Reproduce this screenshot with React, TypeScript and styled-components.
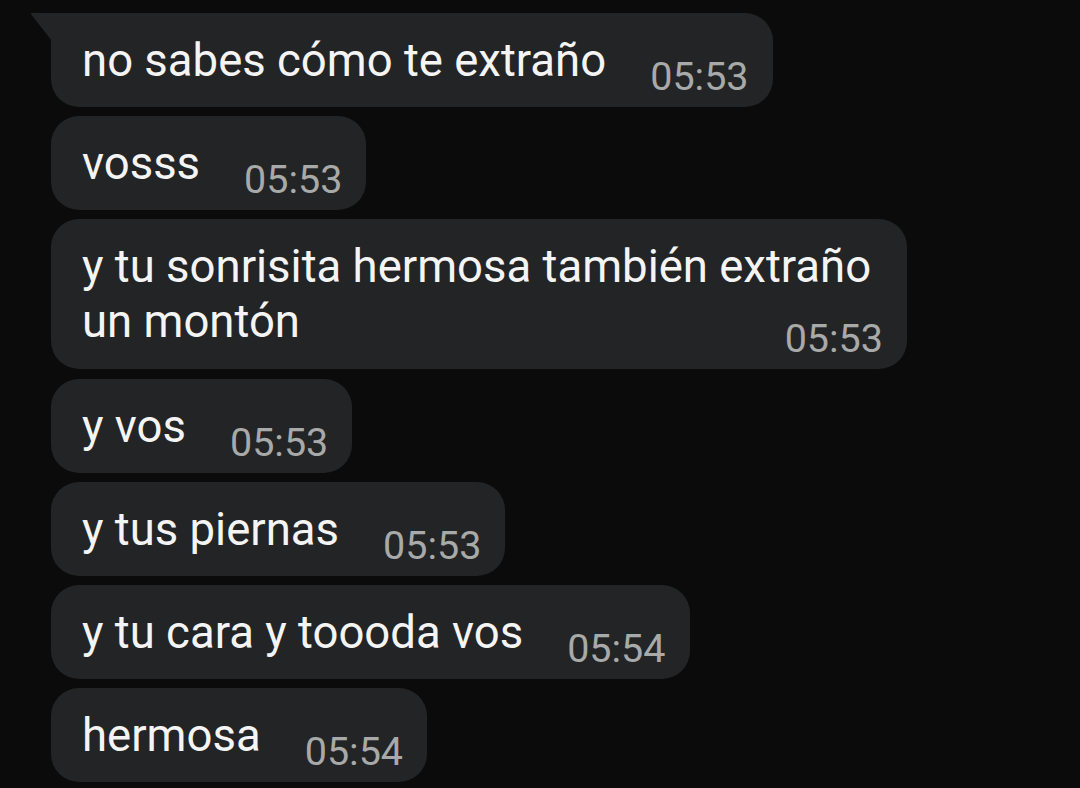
import React from 'react'
import styled, { createGlobalStyle } from 'styled-components'

const GlobalStyle = createGlobalStyle`
	html, body {
		margin: 0;
		padding: 0;
		background: #0b0b0b;
	}
	body {
		font-family: Roboto, 'Noto Sans', sans-serif;
	}
`

const ChatList = styled.div`
	min-height: 788px;
	box-sizing: border-box;
	padding: 13px 0 0 51px;
	display: flex;
	flex-direction: column;
	align-items: flex-start;
	gap: 9px;
	background: #0b0b0b;
`

const Bubble = styled.div<{ $first?: boolean; $stacked?: boolean }>`
	position: relative;
	box-sizing: border-box;
	background: #232425;
	border-radius: 28px;
	border-top-left-radius: ${(p) => (p.$first ? '0' : '28px')};
	padding: 20px 24px 8px 31px;
	display: flex;
	flex-direction: ${(p) => (p.$stacked ? 'column' : 'row')};
	align-items: flex-start;
	max-width: ${(p) => (p.$stacked ? '856px' : 'none')};
	margin-bottom: ${(p) => (p.$stacked ? '1px' : '0')};
`

const Tail = styled.svg`
	position: absolute;
	left: -21px;
	top: 0;
	width: 22px;
	height: 28px;
`

const Text = styled.span<{ $stacked?: boolean }>`
	color: #f4f4f4;
	font-size: 45.5px;
	line-height: 55px;
	white-space: ${(p) => (p.$stacked ? 'normal' : 'nowrap')};
	padding-right: ${(p) => (p.$stacked ? '10px' : '0')};
`

const Time = styled.span<{ $stacked?: boolean }>`
	color: #a8a9a9;
	font-size: 39.5px;
	line-height: 44px;
	white-space: nowrap;
	margin-left: ${(p) => (p.$stacked ? '0' : '44px')};
	margin-top: ${(p) => (p.$stacked ? '-32px' : '22px')};
	align-self: ${(p) => (p.$stacked ? 'flex-end' : 'flex-start')};
`

interface Message {
	text: string
	time: string
	stacked?: boolean
}

const messages: Message[] = [
	{ text: 'no sabes cómo te extraño', time: '05:53' },
	{ text: 'vosss', time: '05:53' },
	{ text: 'y tu sonrisita hermosa también extraño un montón', time: '05:53', stacked: true },
	{ text: 'y vos', time: '05:53' },
	{ text: 'y tus piernas', time: '05:53' },
	{ text: 'y tu cara y toooda vos', time: '05:54' },
	{ text: 'hermosa', time: '05:54' },
]

const App: React.FC = () => {
	return (
		<>
			<GlobalStyle />
			<ChatList>
				{messages.map((m, index) => (
					<Bubble key={index} $first={index === 0} $stacked={m.stacked}>
						{index === 0 && (
							<Tail viewBox="0 0 22 28">
								<path d="M22 0 L2.5 0 Q0 0 1.6 2 L22 28 Z" fill="#232425" />
							</Tail>
						)}
						<Text $stacked={m.stacked}>{m.text}</Text>
						<Time $stacked={m.stacked}>{m.time}</Time>
					</Bubble>
				))}
			</ChatList>
		</>
	)
}

export default App
